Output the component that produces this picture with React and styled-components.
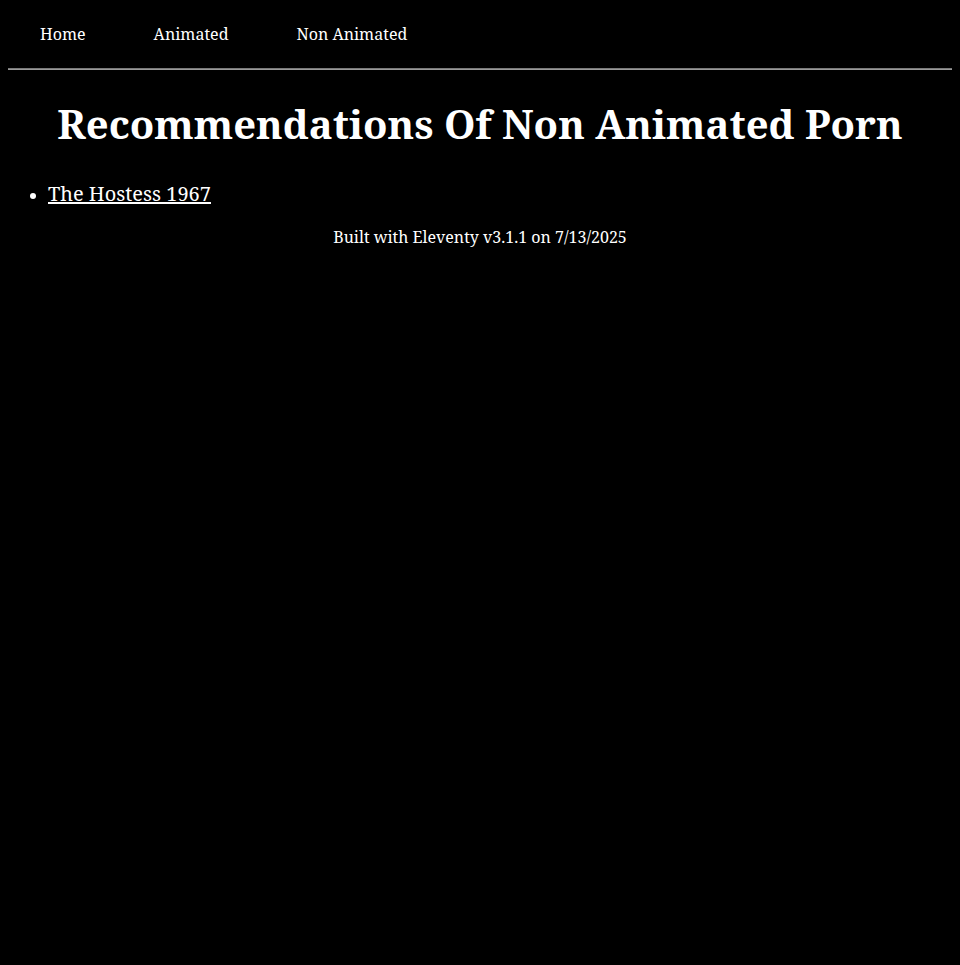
import styled, { createGlobalStyle } from "styled-components";

const GlobalStyle = createGlobalStyle`
  html, body {
    background: #000;
  }

  body {
    margin: 8px;
    color: #fff;
    font-family: "Noto Serif", "Droid Serif", "DejaVu Serif", serif;
  }
`;

const Nav = styled.nav`
  padding: 15px 0 15px 32px;
`;

const NavList = styled.ul`
  display: flex;
  gap: 68px;
  list-style: none;
  margin: 0;
  padding: 0;
`;

const NavLink = styled.a`
  color: #fff;
  font-size: 16px;
  text-decoration: none;
`;

const Rule = styled.hr`
  margin: 8px 0;
  border: none;
  border-top: 1px solid #7a7a7a;
  border-bottom: 1px solid #9a9a9a;
`;

const Title = styled.h1`
  margin: 26px 0 29px;
  font-size: 40px;
  font-weight: bold;
  text-align: center;
`;

const Posts = styled.ul`
  margin: 0 0 19px;
  padding-left: 40px;
  font-size: 16px;

  a {
    color: #fff;
    font-size: 20px;
    text-decoration: underline;
  }
`;

const Footer = styled.footer`
  font-size: 16px;
  text-align: center;
`;

const links = ["Home", "Animated", "Non Animated"];

export default function App() {
  return (
    <>
      <GlobalStyle />
      <Nav>
        <NavList>
          {links.map((label) => (
            <li key={label}>
              <NavLink href="#">{label}</NavLink>
            </li>
          ))}
        </NavList>
      </Nav>
      <Rule />
      <main>
        <Title>Recommendations Of Non Animated Porn</Title>
        <Posts>
          <li>
            <a href="#">The Hostess 1967</a>
          </li>
        </Posts>
      </main>
      <Footer>Built with Eleventy v3.1.1 on 7/13/2025</Footer>
    </>
  );
}
